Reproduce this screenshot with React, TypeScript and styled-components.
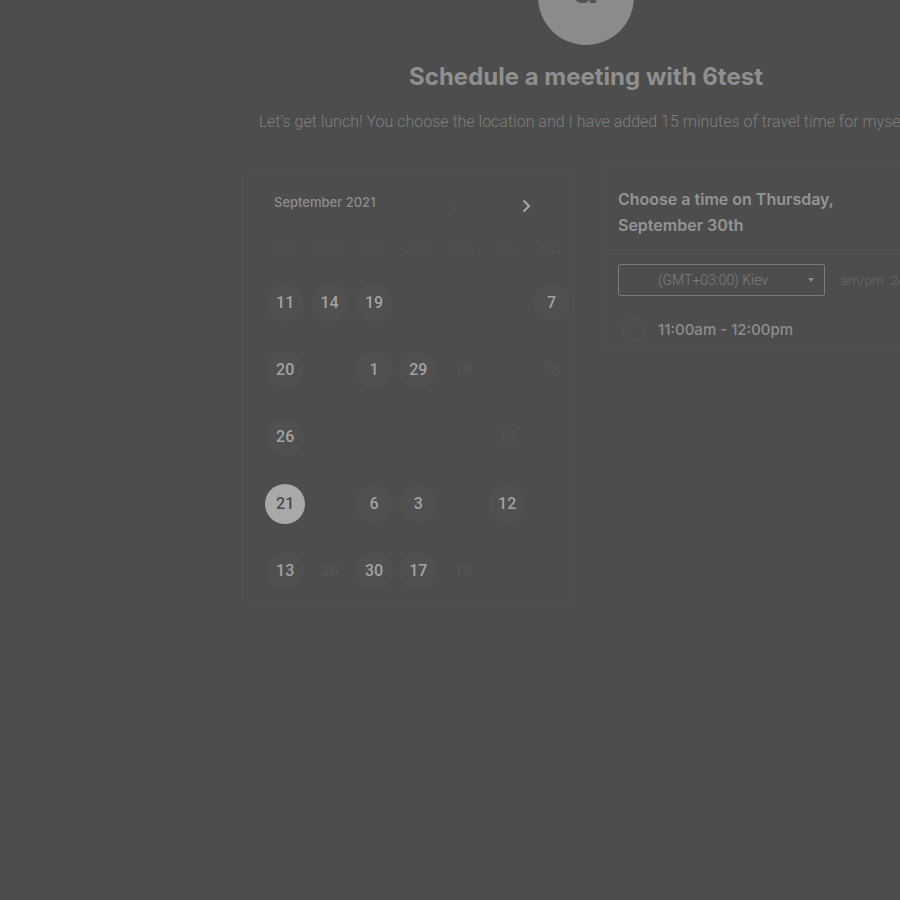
import styled, { createGlobalStyle } from 'styled-components';
import { FC } from 'react';

const GlobalStyle = createGlobalStyle`
  html, body {
    margin: 0;
    padding: 0;
    background: #4d4d4d;
    overflow: hidden;
  }
  body {
    font-family: Roboto, "Liberation Sans", sans-serif;
  }
`;

const Page = styled.div`
  width: 1172px;
  display: flex;
  flex-direction: column;
  align-items: center;
`;

const Avatar = styled.div`
  width: 96px;
  height: 96px;
  margin-top: -51px;
  border-radius: 50%;
  background: #8b8b8b;
  display: flex;
  justify-content: center;
  align-items: flex-end;
  padding-bottom: 36px;
  box-sizing: border-box;
  font-family: Inter, sans-serif;
  font-weight: 700;
  font-size: 44px;
  line-height: 1;
  color: #545454;
`;

const Title = styled.h1`
  margin: 18px 0 0;
  font-family: Inter, sans-serif;
  font-weight: 700;
  font-size: 24px;
  line-height: 28px;
  color: #8f8f8f;
`;

const Subtitle = styled.p`
  margin: 21px 0 0;
  font-family: Roboto, sans-serif;
  font-weight: 300;
  font-size: 16px;
  line-height: 20px;
  color: #7e7e7e;
  white-space: nowrap;
`;

const Columns = styled.div`
  display: flex;
  align-items: flex-start;
  gap: 28px;
  margin-top: 34px;
  width: 678px;
`;

const CalendarCard = styled.div`
  width: 327px;
  margin-top: 8px;
  padding: 16px 0 0;
  box-sizing: border-box;
  border: 1px solid #515151;
  border-radius: 2px;
  height: 428px;
`;

const CalHeader = styled.div`
  display: flex;
  align-items: center;
  height: 22px;
  padding: 0 39px 0 26px;
`;

const Month = styled.div`
  flex: 1;
  font-family: Inter, sans-serif;
  font-weight: 500;
  font-size: 13px;
  color: #8c8c8c;
`;

const NavButtons = styled.div`
  display: flex;
  gap: 56px;
`;

const NavButton = styled.div<{ $active?: boolean }>`
  width: 16px;
  height: 16px;
  display: flex;
  align-items: center;
  justify-content: center;
  margin-top: 8px;
  color: ${(p) => (p.$active ? '#a3a3a3' : '#525252')};
`;

const Weekdays = styled.div`
  display: grid;
  grid-template-columns: repeat(7, 44.4px);
  margin: 27px 0 0 15px;
  height: 20px;
  align-items: center;
`;

const Weekday = styled.div`
  text-align: center;
  font-family: Roboto, sans-serif;
  font-size: 12px;
  letter-spacing: 1px;
  color: #535353;
  text-transform: uppercase;
`;

const DaysGrid = styled.div`
  display: grid;
  grid-template-columns: repeat(7, 44.4px);
  grid-auto-rows: 67px;
  margin: 9px 0 0 15px;
`;

const Cell = styled.div`
  display: flex;
  align-items: center;
  justify-content: center;
`;

type DayKind = 'open' | 'faint' | 'selected';

const Day = styled.div<{ $kind: DayKind }>`
  width: ${(p) => (p.$kind === 'selected' ? 40 : 38)}px;
  height: ${(p) => (p.$kind === 'selected' ? 40 : 38)}px;
  border-radius: 50%;
  display: flex;
  align-items: center;
  justify-content: center;
  font-family: Roboto, sans-serif;
  font-size: 16px;
  font-weight: ${(p) => (p.$kind === 'faint' ? 400 : 500)};
  background: ${(p) =>
    p.$kind === 'selected' ? '#a9a9a9' : p.$kind === 'open' ? '#505050' : 'transparent'};
  color: ${(p) =>
    p.$kind === 'selected' ? '#4a4a4a' : p.$kind === 'open' ? '#a2a2a2' : '#555555'};
`;

const TimePanel = styled.div`
  width: 322px;
  border: 1px solid #525252;
  border-right: none;
  box-sizing: border-box;
  height: 184px;
`;

const PanelHeading = styled.h2`
  margin: 0;
  padding: 19px 15px 15px;
  font-family: Inter, sans-serif;
  font-weight: 600;
  font-size: 16px;
  line-height: 26px;
  color: #949494;
  border-bottom: 1px solid #535353;
`;

const Controls = styled.div`
  display: flex;
  align-items: center;
  gap: 16px;
  padding: 10px 15px 0;
`;

const Select = styled.div`
  flex-shrink: 0;
  width: 207px;
  height: 32px;
  box-sizing: border-box;
  border: 1px solid #7a7a7a;
  border-radius: 2px;
  display: flex;
  align-items: center;
  padding: 0 10px 0 39px;
  font-family: Roboto, sans-serif;
  font-weight: 300;
  font-size: 14px;
  color: #7d7d7d;
`;

const SelectText = styled.span`
  flex: 1;
`;

const Caret = styled.span`
  width: 0;
  height: 0;
  border-left: 3.5px solid transparent;
  border-right: 3.5px solid transparent;
  border-top: 4px solid #8a8a8a;
`;

const Format = styled.div`
  font-family: Roboto, sans-serif;
  font-weight: 300;
  font-size: 13px;
  color: #6a6a6a;
  white-space: nowrap;
  word-spacing: 4px;
`;

const TimeRow = styled.div`
  display: flex;
  align-items: center;
  gap: 13px;
  padding: 22px 18px 0 19px;
`;

const Radio = styled.div`
  width: 21px;
  height: 21px;
  border-radius: 50%;
  border: 1px solid #585858;
`;

const TimeLabel = styled.span`
  font-family: Inter, sans-serif;
  font-weight: 500;
  font-size: 15px;
  color: #8d8d8d;
`;

type DayCell = { n: number; kind: DayKind } | null;

const o = (n: number): DayCell => ({ n, kind: 'open' });
const f = (n: number): DayCell => ({ n, kind: 'faint' });

const weeks: DayCell[][] = [
  [o(11), o(14), o(19), null, null, null, o(7)],
  [o(20), null, o(1), o(29), f(19), null, f(28)],
  [o(26), null, null, null, null, f(15), null],
  [{ n: 21, kind: 'selected' }, null, o(6), o(3), null, o(12), null],
  [o(13), f(28), o(30), o(17), f(19), null, null],
];

const weekdayNames = ['Sun', 'Mon', 'Tue', 'Wed', 'Thu', 'Fri', 'Sat'];

const Chevron: FC<{ dir: 'left' | 'right' }> = ({ dir }) => (
  <svg width="12" height="14" viewBox="0 0 12 14" fill="none">
    <path
      d={dir === 'right' ? 'M3.5 1.5 L9 7 L3.5 12.5' : 'M8.5 1.5 L3 7 L8.5 12.5'}
      stroke="currentColor"
      strokeWidth="2.2"
    />
  </svg>
);

const App: FC = () => (
  <>
    <GlobalStyle />
    <Page>
      <Avatar>a</Avatar>
      <Title>Schedule a meeting with 6test</Title>
      <Subtitle>
        Let’s get lunch! You choose the location and I have added 15 minutes of travel time for
        myself.
      </Subtitle>
      <Columns>
        <CalendarCard>
          <CalHeader>
            <Month>September 2021</Month>
            <NavButtons>
              <NavButton>
                <Chevron dir="left" />
              </NavButton>
              <NavButton $active>
                <Chevron dir="right" />
              </NavButton>
            </NavButtons>
          </CalHeader>
          <Weekdays>
            {weekdayNames.map((d) => (
              <Weekday key={d}>{d}</Weekday>
            ))}
          </Weekdays>
          <DaysGrid>
            {weeks.flatMap((week, wi) =>
              week.map((cell, ci) => (
                <Cell key={`${wi}-${ci}`}>
                  {cell && <Day $kind={cell.kind}>{cell.n}</Day>}
                </Cell>
              ))
            )}
          </DaysGrid>
        </CalendarCard>
        <TimePanel>
          <PanelHeading>
            Choose a time on Thursday,
            <br />
            September 30th
          </PanelHeading>
          <Controls>
            <Select>
              <SelectText>(GMT+03:00) Kiev</SelectText>
              <Caret />
            </Select>
            <Format>am/pm 24hr</Format>
          </Controls>
          <TimeRow>
            <Radio />
            <TimeLabel>11:00am - 12:00pm</TimeLabel>
          </TimeRow>
        </TimePanel>
      </Columns>
    </Page>
  </>
);

export default App;
